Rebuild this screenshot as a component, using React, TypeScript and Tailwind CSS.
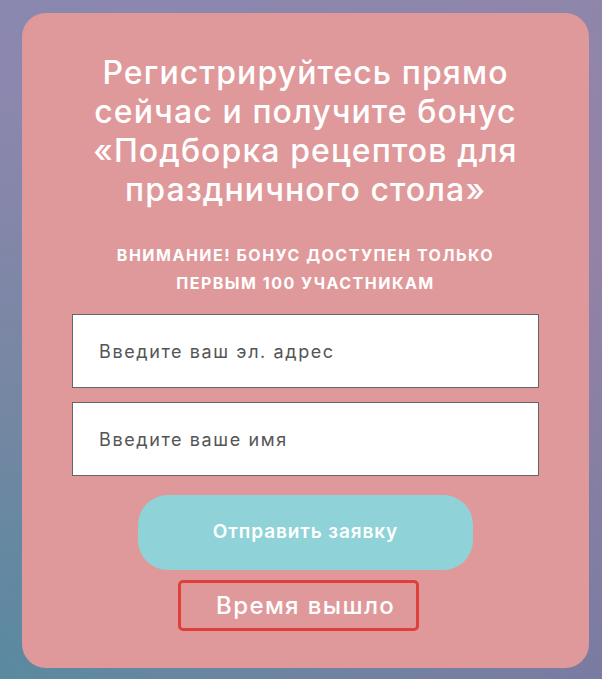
import React from 'react';

export default function App() {
  return (
    <div
      className="w-[602px] h-[679px] overflow-hidden bg-[radial-gradient(circle_at_0%_100%,#5a8aa0_0%,rgba(92,136,162,0)_65%),linear-gradient(160deg,#8a88b0_0%,#9483a6_50%,#7a7ba2_100%)] pl-[22px] pr-[13px] pt-[13px] pb-[11px]"
      style={{ fontFamily: 'Inter, "Noto Sans", sans-serif' }}
    >
      <div className="h-full rounded-[24px] bg-[#e0999b] flex flex-col items-center pt-[40px]">
        {/* Heading */}
        <h1 className="text-white text-[32px] leading-[39px] font-medium text-center w-[470px] tracking-[1.1px]">
          Регистрируйтесь прямо сейчас и получите бонус «Подборка рецептов для праздничного стола»
        </h1>

        <p className="mt-[32px] text-white text-[16px] leading-[28px] font-bold uppercase text-center w-[400px] tracking-[1.5px]">
          Внимание! Бонус доступен только первым 100 участникам
        </p>

        {/* Form */}
        <div className="mt-[17px] w-[467px] flex flex-col gap-[14px]">
          <input
            className="h-[74px] w-full bg-white border border-[#666] px-[26px] text-[18px] tracking-[1.6px] text-[#333] placeholder:text-[#555] outline-none"
            placeholder="Введите ваш эл. адрес"
          />
          <input
            className="h-[74px] w-full bg-white border border-[#666] px-[26px] text-[18px] tracking-[1.6px] text-[#333] placeholder:text-[#555] outline-none"
            placeholder="Введите ваше имя"
          />
        </div>

        <button className="mt-[19px] w-[335px] h-[75px] rounded-[30px] bg-[#8fd3d8] text-white text-[19px] font-semibold tracking-[0.9px]">
          Отправить заявку
        </button>

        <div className="mt-[10px] mr-[14px] w-[241px] h-[51px] border-[3px] border-[#e0403a] rounded-[5px] flex items-center pl-[35px] text-white text-[24px] font-medium tracking-[1.4px]">
          Время вышло
        </div>
      </div>
    </div>
  );
}
